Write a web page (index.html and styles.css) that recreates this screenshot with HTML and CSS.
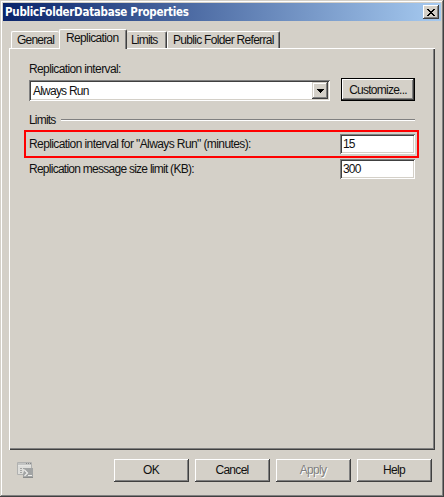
FILE: index.html
```
<!DOCTYPE html>
<html lang="en">
<head>
<meta charset="utf-8">
<title>PublicFolderDatabase Properties</title>
<link rel="stylesheet" href="styles.css">
</head>
<body>
<main class="window">
  <header class="titlebar">
    <h1>PublicFolderDatabase Properties</h1>
    <button class="close" aria-label="Close"><svg width="8" height="7" viewBox="0 0 8 7" shape-rendering="crispEdges"><path d="M0 0h2v1h1v1h2V1h1V0h2v1H7v1H6v1H5v1h1v1h1v1h1v1H6V6H5V5H3v1H2v1H0V6h1V5h1V4h1V3H2V2H1V1H0z"/></svg></button>
  </header>
  <nav class="tabs">
    <div class="tab general"><span>General</span></div>
    <div class="tab active"><span>Replication</span></div>
    <div class="tab limits"><span>Limits</span></div>
    <div class="tab referral"><span>Public Folder Referral</span></div>
  </nav>
  <section class="panel">
    <div class="label interval">Replication interval:</div>
    <div class="choose">
      <div class="combo"><span>Always Run</span><div class="drop"><svg width="7" height="4" viewBox="0 0 7 4" shape-rendering="crispEdges"><path d="M0 0h7v1H6v1H5v1H4v1H3V3H2V2H1V1H0z"/></svg></div></div>
      <button class="customize"><span>Customize...</span></button>
    </div>
    <div class="group"><span>Limits</span><i></i></div>
    <div class="row highlighted"><span class="always">Replication interval for "Always Run" (minutes):</span><div class="field">15</div></div>
    <div class="row"><span class="size">Replication message size limit (KB):</span><div class="field">300</div></div>
  </section>
  <footer class="footer">
    <svg class="script" width="17" height="17" viewBox="0 0 17 17">
      <path d="M.5 .5h14v12H.5z" fill="#dededb" stroke="#b0b1b0"/>
      <path d="M1 1h13v2H1z" fill="#c3c4c3"/>
      <path d="M9 1.5h1M11 1.5h1M13 1.5h1" stroke="#858686"/>
      <path d="M1 3.5h13" stroke="#e6e6e3"/>
      <path d="M3 6.5h2M3 8.5h2M3 10.5h2M6 6.5h5" stroke="#a3a4a3"/>
      <path d="M8 6h8v10H6v-4z" fill="#a2a4a4"/>
      <path d="M6 15.5h10" fill="none" stroke="#8a8c8c"/>
      <path d="M7.5 8l3 3-3 3M11 13.5h4" fill="none" stroke="#eeeeec" stroke-width="1.2"/>
    </svg>
    <button class="ok"><span>OK</span></button>
    <button class="cancel"><span>Cancel</span></button>
    <button class="apply" disabled><span>Apply</span></button>
    <button class="help"><span>Help</span></button>
  </footer>
</main>
</body>
</html>
```
FILE: styles.css
```
* { box-sizing: border-box; }
body { margin: 0; background: #d4d0c8; }
.window {
  width: 444px; height: 497px; padding: 3px 2px 2px 3px;
  background: #d4d0c8; color: #111;
  font: 12px/14px "Liberation Sans", Arial, sans-serif;
  box-shadow: inset -1px -1px #404040, inset 1px 1px #d4d0c8, inset -2px -2px #808080, inset 2px 2px #fff;
}
button {
  display: flex; align-items: center; justify-content: center;
  margin: 0; padding: 0; border: 0; border-radius: 0;
  font: inherit; color: #111; background: #d4d0c8;
  box-shadow: inset -1px -1px #404040, inset 1px 1px #fff, inset -2px -2px #808080;
}
span { white-space: nowrap; }
.titlebar {
  display: flex; align-items: center; justify-content: space-between;
  width: 438px; height: 18px; padding: 0 2px;
  background: linear-gradient(90deg, #0a246a, #a6caf0);
}
h1 { margin: 0; padding-top: 1px; color: #fff; font: bold 11.5px/17px "DejaVu Sans Condensed", "DejaVu Sans", sans-serif; font-stretch: condensed; letter-spacing: -.27px; white-space: nowrap; }
.close { width: 16px; height: 14px; }
.tabs { display: flex; align-items: flex-end; height: 27px; padding-left: 8px; }
.tab {
  height: 17px; padding: 1px 0 0 5px; border-top: 1px solid #fff; border-left: 1px solid #fff;
  border-radius: 2px 2px 0 0;
}
.general { width: 48px; letter-spacing: -.8px; }
.active {
  width: 68px; height: 20px; margin-bottom: -1px; padding-left: 6px; position: relative;
  border-right: 1px solid #404040; background: #d4d0c8; box-shadow: inset -1px 0 #808080; letter-spacing: -.63px;
}
.limits { width: 40px; padding-left: 4px; border-left: 0; border-right: 1px solid #404040; box-shadow: inset -1px 0 #808080; letter-spacing: -.8px; }
.referral { width: 113px; border-right: 1px solid #404040; box-shadow: inset -1px 0 #808080; letter-spacing: -.7px; }
.panel {
  width: 426px; height: 402px; margin-left: 6px; padding: 14px 15px 0 15px;
  box-shadow: inset 1px 1px #fff, inset -1px -1px #404040, inset -2px -2px #808080;
}
.label { margin-left: 5px; height: 18px; }
.interval { letter-spacing: -.62px; }
.choose { display: flex; margin-left: 5px; height: 23px; margin-top: -2px; }
.combo, .field {
  background: #fff;
  box-shadow: inset 1px 1px #808080, inset -1px -1px #fff, inset 2px 2px #404040, inset -2px -2px #d4d0c8;
}
.combo { display: flex; justify-content: space-between; width: 301px; height: 21px; margin: 2px 11px 0 0; padding: 2px 2px 2px 4px; line-height: 18px; letter-spacing: -.78px; }
.drop { display: flex; align-items: center; justify-content: center; width: 16px; height: 17px; background: #d4d0c8; box-shadow: inset -1px -1px #404040, inset 1px 1px #d4d0c8, inset -2px -2px #808080, inset 2px 2px #fff; }
.customize { width: 74px; height: 23px; border: 1px solid #000; letter-spacing: -.75px; }
.group { display: flex; align-items: center; gap: 5px; height: 14px; margin: 12px 5px 3px; letter-spacing: -.8px; }
.group i { flex: 1; height: 2px; border-top: 1px solid #808080; border-bottom: 1px solid #fff; }
.row { display: flex; align-items: center; justify-content: space-between; width: 395px; height: 22px; padding: 0 4px 0 5px; }
.highlighted { height: 28px; border: 2px solid #f00; padding: 0 2px 0 3px; }
.field { width: 75px; height: 20px; padding: 0 0 0 3px; line-height: 20px; letter-spacing: -.8px; }
.always { letter-spacing: -.6px; }
.size { letter-spacing: -.74px; }
.footer { display: flex; align-items: center; gap: 6px; height: 40px; padding: 0 0 0 14px; }
.script { margin: 0 74px 0 0; }
.footer button { width: 75px; height: 23px; padding-right: 1px; letter-spacing: -.7px; }
.footer .apply { color: #808080; text-shadow: 1px 1px #fff; }
```
